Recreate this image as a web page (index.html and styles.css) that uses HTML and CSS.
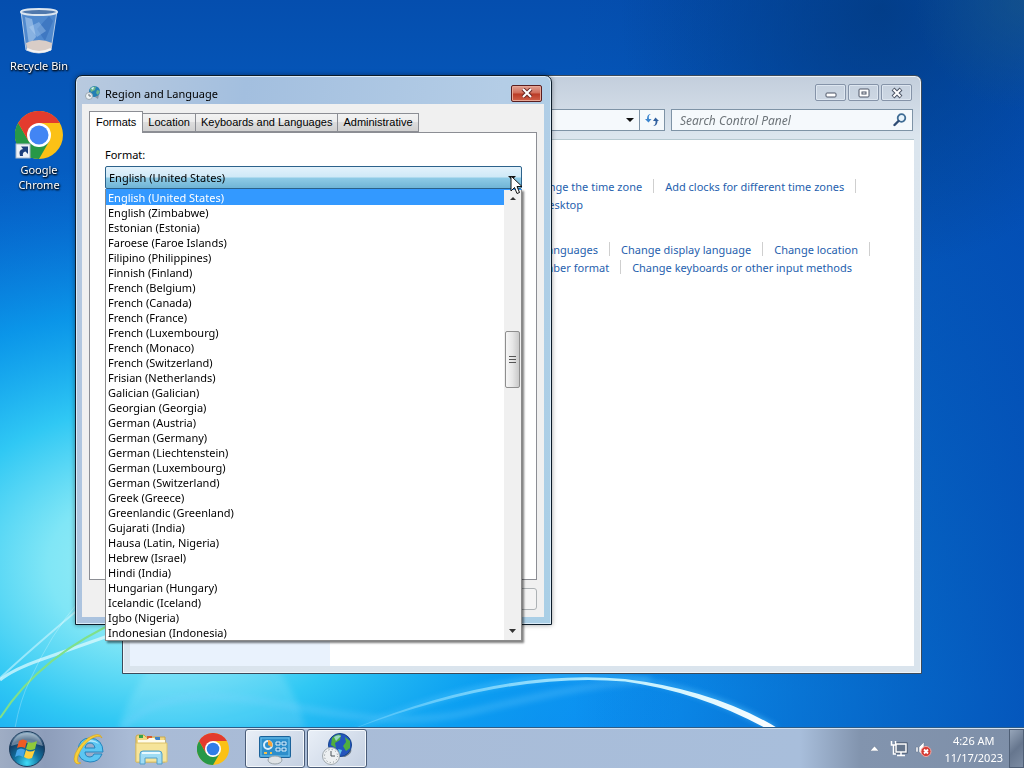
FILE: index.html
```html
<!DOCTYPE html>
<html lang="en">
<head>
  <meta charset="UTF-8" />
  <meta name="viewport" content="width=device-width, initial-scale=1.0" />
  <title>Region and Language</title>
  <link rel="stylesheet" href="styles.css">
</head>
<body>

  <!-- Wallpaper -->
  <svg class="wallpaper" viewBox="0 0 1024 768" preserveAspectRatio="none" aria-hidden="true">
    <defs>
      <linearGradient id="sky" x1="0" y1="0" x2="0" y2="1">
        <stop offset="0" stop-color="#054eae"/>
        <stop offset=".3" stop-color="#0562c8"/>
        <stop offset=".7" stop-color="#0a88e6"/>
        <stop offset=".9" stop-color="#0c96f6"/>
        <stop offset="1" stop-color="#0c92f6"/>
      </linearGradient>
      <radialGradient id="glow" gradientUnits="userSpaceOnUse" cx="0" cy="0" r="1" gradientTransform="translate(160 565) scale(560 400)">
        <stop offset="0" stop-color="#a4f0f6"/>
        <stop offset=".2" stop-color="#80e6f6"/>
        <stop offset=".4" stop-color="#30c8f4"/>
        <stop offset=".64" stop-color="#0ca2f0" stop-opacity=".75"/>
        <stop offset="1" stop-color="#0a7ae0" stop-opacity="0"/>
      </radialGradient>
      <linearGradient id="shade" x1="0" y1="0" x2="1" y2="0">
        <stop offset=".56" stop-color="#0348a4" stop-opacity="0"/>
        <stop offset=".88" stop-color="#034cae" stop-opacity=".65"/>
        <stop offset="1" stop-color="#034cb2" stop-opacity=".85"/>
      </linearGradient>
      <radialGradient id="corner" gradientUnits="userSpaceOnUse" cx="880" cy="10" r="260">
        <stop offset="0" stop-color="#023a80" stop-opacity=".8"/>
        <stop offset="1" stop-color="#023a80" stop-opacity="0"/>
      </radialGradient>
      <radialGradient id="leaf" gradientUnits="userSpaceOnUse" cx="1024" cy="0" r="110">
        <stop offset="0" stop-color="#1c5680" stop-opacity=".6"/>
        <stop offset="1" stop-color="#1c5680" stop-opacity="0"/>
      </radialGradient>
      <linearGradient id="streak" gradientUnits="userSpaceOnUse" x1="350" y1="0" x2="780" y2="0">
        <stop offset="0" stop-color="#7fd8ff" stop-opacity=".4"/>
        <stop offset=".6" stop-color="#b8eeff"/>
        <stop offset="1" stop-color="#fff"/>
      </linearGradient>
      <filter id="soft"><feGaussianBlur stdDeviation="3"/></filter>
    </defs>
    <rect width="1024" height="768" fill="url(#sky)"/>
    <rect width="1024" height="768" fill="url(#glow)"/>
    <rect width="1024" height="768" fill="url(#shade)"/>
    <rect width="1024" height="768" fill="url(#corner)"/>
    <rect width="1024" height="768" fill="url(#leaf)"/>
    <path d="M118 728Q140 670 170 645L250 640Q295 680 305 728Z" fill="#fff" opacity=".12" filter="url(#soft)"/>
    <path d="M122 728C200 650 330 745 470 712S610 685 650 680" fill="none" stroke="#7fd4ff" stroke-width="5" opacity=".35" filter="url(#soft)"/>
    <path d="M0 678Q30 650 80 608" fill="none" stroke="#d8faff" stroke-width="2" opacity=".55"/>
    <path d="M0 680Q12 670 40 660T125 630" fill="none" stroke="#e4fcff" stroke-width="3" opacity=".7"/>
    <path d="M0 718Q40 655 125 618" fill="none" stroke="#7fe08a" stroke-width="2"/>
    <path d="M15 728Q20 700 30 680Q50 635 80 600" fill="none" stroke="#fff" stroke-width="1" opacity=".25"/>
    <path d="M355 728Q500 665 625 676Q715 690 778 728H768Q700 690 625 678.500Q510 668 355 729Z" fill="#5cc8ff" filter="url(#soft)" opacity=".8"/>
    <path d="M355 728Q500 668 625 679Q715 690 779 729H767Q700 692 625 681.500Q510 671 355 728.500Z" fill="url(#streak)"/>
  </svg>

  <main class="desktop">
    <div class="icons">
      <button class="shortcut">
        <svg width="48" height="48" viewBox="0 0 48 48">
          <path d="M6 4L11 43Q24 49 36 43L42 4Z" fill="#8eb8e6" fill-opacity=".55" stroke="#b4cbe6" stroke-width="1"/>
          <path d="M10 10L14 38L21 30L17 12Z" fill="#dff0ff" opacity=".4"/>
          <path d="M34 9L22 22L30 34L38 14Z" fill="#2c64b4" opacity=".45"/>
          <path d="M14 20L24 15L31 24L22 30Z" fill="#bfdcf8" opacity=".35"/>
          <path d="M11 36Q24 30 37 36L36 43Q24 49 12 43Z" fill="#d9cdc7"/>
          <path d="M12 42Q24 48 36 42" fill="none" stroke="#f3f3f3" stroke-width="2"/>
          <ellipse cx="24" cy="5" rx="18" ry="3" fill="#5078ac" stroke="#dce6f0" stroke-width="2"/>
        </svg>
        <span>Recycle Bin</span>
      </button>
      <button class="shortcut">
        <svg width="48" height="48" viewBox="0 0 48 48">
          <circle cx="24" cy="24" r="24" fill="#fbc116"/>
          <path d="M13.600 30L3.200 12A24 24 0 0 0 24 48L34.400 30L24 36Z" fill="#279847"/>
          <path d="M3.200 12A24 24 0 0 1 44.800 12H24L13.600 30Z" fill="#e33b2e"/>
          <circle cx="24" cy="24" r="12" fill="#fff"/>
          <circle cx="24" cy="24" r="9.500" fill="#4285f4"/>
          <rect x="1" y="33" width="14" height="14" fill="#eef2f7" stroke="#aab8c8"/>
          <path d="M5 45Q3 39 8 38L6 35.500H13V43L10.500 40.500Q7 41 8 45Z" fill="#1d3f7c"/>
        </svg>
        <span>Google Chrome</span>
      </button>
    </div>

    <!-- Control Panel -->
    <section class="window panel-window" aria-label="Control Panel">
      <div class="caption">
        <button aria-label="Minimize"><svg width="14" height="12"><rect x="2" y="6" width="10" height="4" rx="1" fill="#fff" stroke="#4c5566"/></svg></button>
        <button aria-label="Maximize"><svg width="14" height="12"><rect x="2" y="2" width="10" height="8" rx="1" fill="#fff" stroke="#4c5566"/><rect x="5" y="5" width="4" height="2" fill="#fff" stroke="#4c5566"/></svg></button>
        <button aria-label="Close"><svg width="14" height="12"><path d="M3 2L11 10M11 2L3 10" stroke="#4c5566" stroke-width="4"/><path d="M3.500 2.500L10.500 9.500M10.500 2.500L3.500 9.500" stroke="#fff" stroke-width="2"/></svg></button>
      </div>
      <div class="toolbar">
        <div class="address">
          <button aria-label="Previous locations"><svg width="8" height="4"><path d="M0 0H8L4 4Z" fill="#111"/></svg></button>
          <button class="refresh" aria-label="Refresh">
            <svg width="14" height="14" viewBox="0 0 14 14"><path d="M6 1Q3 2 4 6H6.500L3.500 9.500L0 6H2Q2 1 6 1Z" fill="#3d86cf"/><path d="M8 13Q11 12 10.500 8H8L10.500 4.500L14 8H12.500Q12.500 13 8 13Z" fill="#2f5f9f"/></svg>
          </button>
        </div>
        <div class="search">
          <input type="text" placeholder="Search Control Panel" aria-label="Search Control Panel">
          <svg width="14" height="14" viewBox="0 0 14 14"><circle cx="8.500" cy="5" r="3.800" fill="#e8f4fc" stroke="#3f6c94" stroke-width="1.800"/><path d="M5.500 8L1.500 12" stroke="#2f4c74" stroke-width="2.400" stroke-linecap="round"/></svg>
        </div>
      </div>
      <div class="panel-body">
        <aside></aside>
        <div class="tasks">
          <div class="group">
            <ul>
              <li><a href="#">Set the time and date</a></li>
              <li><a href="#">Change the time zone</a></li>
              <li><a href="#">Add clocks for different time zones</a></li>
            </ul>
            <ul>
              <li class="last"><a href="#">Add the Clock gadget to the desktop</a></li>
            </ul>
          </div>
          <div class="group">
            <ul>
              <li class="wide"><a href="#">Install or uninstall display languages</a></li>
              <li><a href="#">Change display language</a></li>
              <li><a href="#">Change location</a></li>
            </ul>
            <ul>
              <li><a href="#">Change the date, time, or number format</a></li>
              <li class="last"><a href="#">Change keyboards or other input methods</a></li>
            </ul>
          </div>
        </div>
      </div>
    </section>

    <!-- Region and Language dialog -->
    <section class="window dialog" role="dialog" aria-labelledby="dialogTitle">
      <header>
        <svg width="16" height="16" viewBox="0 0 16 16">
          <circle cx="9.500" cy="6.500" r="5.500" fill="#247fb4"/>
          <path d="M7 2L11 1.500L10 5L6 7L5 4ZM12 5L15 6L13 10L11 8Z" fill="#6fb48a"/>
          <path d="M6 3L9 2L8 5Z" fill="#d4f4ff"/>
          <path d="M10 12L14 10L13 14Z" fill="#8593a4"/>
          <circle cx="4" cy="11" r="3.500" fill="#edf2f5" stroke="#9aa7b1"/>
          <path d="M4 9V11H6" fill="none" stroke="#66727d"/>
        </svg>
        <h1 id="dialogTitle">Region and Language</h1>
        <button class="close" aria-label="Close"><svg width="12" height="10"><path d="M2 1L10 9M10 1L2 9" stroke="#6d2a26" stroke-width="4"/><path d="M2 1L10 9M10 1L2 9" stroke="#fff" stroke-width="2"/></svg></button>
      </header>
      <div class="client">
        <div class="tabs" role="tablist">
          <button role="tab" class="active" aria-selected="true">Formats</button>
          <button role="tab">Location</button>
          <button role="tab">Keyboards and Languages</button>
          <button role="tab">Administrative</button>
        </div>
        <div class="sheet">
          <label for="format">Format:</label>
          <div class="combo">
            <select id="format"><option>English (United States)</option></select>
            <svg class="arrow" width="8" height="4"><path d="M0 0H8L4 4Z" fill="#111"/></svg>
            <div class="dropdown">
              <ul role="listbox" aria-label="Format">
                <li role="option" aria-selected="true" class="selected">English (United States)</li>
                <li role="option">English (Zimbabwe)</li>
                <li role="option">Estonian (Estonia)</li>
                <li role="option">Faroese (Faroe Islands)</li>
                <li role="option">Filipino (Philippines)</li>
                <li role="option">Finnish (Finland)</li>
                <li role="option">French (Belgium)</li>
                <li role="option">French (Canada)</li>
                <li role="option">French (France)</li>
                <li role="option">French (Luxembourg)</li>
                <li role="option">French (Monaco)</li>
                <li role="option">French (Switzerland)</li>
                <li role="option">Frisian (Netherlands)</li>
                <li role="option">Galician (Galician)</li>
                <li role="option">Georgian (Georgia)</li>
                <li role="option">German (Austria)</li>
                <li role="option">German (Germany)</li>
                <li role="option">German (Liechtenstein)</li>
                <li role="option">German (Luxembourg)</li>
                <li role="option">German (Switzerland)</li>
                <li role="option">Greek (Greece)</li>
                <li role="option">Greenlandic (Greenland)</li>
                <li role="option">Gujarati (India)</li>
                <li role="option">Hausa (Latin, Nigeria)</li>
                <li role="option">Hebrew (Israel)</li>
                <li role="option">Hindi (India)</li>
                <li role="option">Hungarian (Hungary)</li>
                <li role="option">Icelandic (Iceland)</li>
                <li role="option">Igbo (Nigeria)</li>
                <li role="option">Indonesian (Indonesia)</li>
              </ul>
              <div class="scrollbar">
                <svg width="6" height="3"><path d="M0 3H6L3 0Z" fill="#333"/></svg>
                <div class="track"><div class="thumb"><i></i><i></i><i></i></div></div>
                <svg width="7" height="4"><path d="M0 0H7L3.500 4Z" fill="#333"/></svg>
              </div>
            </div>
            <svg class="cursor" width="13" height="20" viewBox="0 0 13 20"><path d="M1 1V16L4.500 12.500L7 18.500L9.500 17.500L7 11.500H12Z" fill="#fff" stroke="#111"/></svg>
          </div>
        </div>
        <footer><button aria-label="Apply" disabled></button></footer>
      </div>
    </section>
  </main>

  <!-- Taskbar -->
  <nav class="taskbar">
    <button class="start" aria-label="Start">
      <svg width="40" height="38" viewBox="0 0 40 38">
        <defs><radialGradient id="orb" cx=".5" cy=".9" r=".9"><stop offset="0" stop-color="#3fdcf8"/><stop offset=".4" stop-color="#12729f"/><stop offset=".75" stop-color="#123a62"/><stop offset="1" stop-color="#8badc6"/></radialGradient></defs>
        <circle cx="20" cy="19" r="17.500" fill="url(#orb)" stroke="#1d3c5c"/>
        <path d="M4 16Q8 3 20 3T36 16Q20 10 4 16Z" fill="#fff" opacity=".35"/>
        <path d="M12 11Q16 8 20 11L18 18Q14 16 10 18Z" fill="#ee5a24"/>
        <path d="M21 12Q25 14 30 11L28 19Q23 21 19 19Z" fill="#8fc93a"/>
        <path d="M10 20Q14 17 18 20L16 27Q12 24 8 27Z" fill="#45a5e8"/>
        <path d="M19 20Q23 23 28 20L25 28Q21 30 17 27Z" fill="#ffd03c"/>
      </svg>
    </button>
    <button class="task" aria-label="Internet Explorer">
      <svg width="34" height="34" viewBox="0 0 34 34">
        <path d="M30 22Q27 30 18 30Q6 29 6 18Q7 6 18 6Q31 7 31 20H13Q13 25 18 25Q21 25 22 22ZM13 16H23Q22 11 18 11Q14 11 13 16Z" fill="#5cc6f2" stroke="#2484bd" fill-rule="evenodd"/>
        <path d="M9 13Q12 8 18 8Q24 8 27 12Q18 7 9 13Z" fill="#c8f0ff" opacity=".8"/>
        <path d="M30 6Q28 -1 16 6Q3 16 2 27Q3 34 9 31Q4 31 6 24Q10 13 19 7Q27 2 30 6Z" fill="#f8cf38" stroke="#d5a015" stroke-width=".6"/>
      </svg>
    </button>
    <button class="task" aria-label="Windows Explorer">
      <svg width="34" height="34" viewBox="0 0 34 34">
        <path d="M2 5Q2 3 4 3H10L12 5H31V30H2Z" fill="#f2d983" stroke="#c9a84a"/>
        <path d="M5 3H9V6H5Z" fill="#35a24a"/><path d="M13 4H18V7H13Z" fill="#d65b32"/><path d="M21 5H26V8H21Z" fill="#3e83c9"/>
        <path d="M4 8H13L15 6H20L22 8H31V11H4Z" fill="#fffbe9"/>
        <path d="M2 11H33V30H2Z" fill="#f6e49a" stroke="#dcc26a"/>
        <path d="M6 32V22Q6 19 9 19H25Q28 19 28 22V32H23V26H11V32Z" fill="#9fdcf4" stroke="#519fc9"/>
        <path d="M8 21H26" stroke="#e8faff" stroke-width="2"/>
      </svg>
    </button>
    <button class="task" aria-label="Google Chrome">
      <svg width="32" height="32" viewBox="0 0 48 48">
        <circle cx="24" cy="24" r="24" fill="#fbc116"/>
        <path d="M13.600 30L3.200 12A24 24 0 0 0 24 48L34.400 30L24 36Z" fill="#279847"/>
        <path d="M3.200 12A24 24 0 0 1 44.800 12H24L13.600 30Z" fill="#e33b2e"/>
        <circle cx="24" cy="24" r="12" fill="#fff"/>
        <circle cx="24" cy="24" r="9.500" fill="#2f7de8"/>
      </svg>
    </button>
    <button class="task open" aria-label="Control Panel">
      <svg width="34" height="32" viewBox="0 0 34 32">
        <rect x="1.500" y="3.500" width="31" height="21" rx="1" fill="#2d8ecb" stroke="#1b629a"/>
        <rect x="3" y="5" width="28" height="18" fill="none" stroke="#72c2ec"/>
        <circle cx="10" cy="12" r="4" fill="none" stroke="#d9f0ff" stroke-width="2"/><path d="M10 12V7A5 5 0 0 1 14 14Z" fill="#f5a33a"/>
        <path d="M18 9H22V12H18ZM24 9H28V12H24ZM18 15H22V18H18ZM24 15H28V18H24Z" fill="#2374b4" stroke="#dff3ff"/>
        <path d="M6 20H9M12 20H14" stroke="#f3c04b" stroke-width="2"/>
        <ellipse cx="17" cy="27" rx="7" ry="4" fill="#dfe3e6" stroke="#98a2a9"/>
      </svg>
    </button>
    <button class="task open" aria-label="Region and Language">
      <svg width="34" height="34" viewBox="0 0 34 34">
        <path d="M14 23L31 17Q33 21 25 25Z" fill="#6e7b88"/>
        <circle cx="20" cy="13" r="11.500" fill="#2455bd" stroke="#14438c"/>
        <path d="M12 6Q17 1 21 3L20 8L15 11L16 16L11 13ZM25 5L30 9L30 16L26 19L23 14L26 10Z" fill="#4fae3e"/>
        <path d="M14 5Q18 2 21 4L16 9Z" fill="#b8e8ff" opacity=".7"/>
        <path d="M18 17L22 18L20 23Z" fill="#62c5e8"/>
        <circle cx="11" cy="24" r="8.500" fill="#edf0f2" stroke="#a1a9ae"/>
        <circle cx="11" cy="24" r="6.500" fill="none" stroke="#838c92" stroke-dasharray="1 2.400"/>
        <path d="M11 19V24H15" fill="none" stroke="#4a5258"/>
      </svg>
    </button>

    <div class="tray">
      <button class="more" aria-label="Show hidden icons"><svg width="9" height="5"><path d="M0 5H9L4.500 0Z" fill="#fff" stroke="#5b6a80" stroke-width=".5"/></svg></button>
      <button aria-label="Network">
        <svg width="18" height="18" viewBox="0 0 18 18"><rect x="6" y="4" width="10" height="8" fill="#66768c" stroke="#37455a" stroke-width="3"/><rect x="6" y="4" width="10" height="8" fill="#66768c" stroke="#fff" stroke-width="1.500"/><path d="M11 12V15M7 15.500H15M3.500 7V14H6M1.500 1V5H5.500V1M3.500 5V7" fill="none" stroke="#fff" stroke-width="1.500"/></svg>
      </button>
      <button aria-label="Volume muted">
        <svg width="18" height="18" viewBox="0 0 18 18"><path d="M2 7H4V12H2ZM5 7L10 2V16L5 12Z" fill="#fff" stroke="#66778d" stroke-width=".5"/><circle cx="12" cy="11.500" r="5" fill="#d53a32" stroke="#f1aaa5"/><path d="M10 9.500L14 13.500M14 9.500L10 13.500" stroke="#fff" stroke-width="1.800"/></svg>
      </button>
      <div class="clock"><time>4:26 AM</time><time>11/17/2023</time></div>
    </div>
    <button class="show-desktop" aria-label="Show desktop"></button>
  </nav>

</body>
</html>
```
FILE: styles.css
```css
* { box-sizing: border-box; margin: 0; padding: 0; }

html, body { height: 100%; }

body {
  display: flex;
  flex-direction: column;
  overflow: hidden;
  background: #0560c6;
  font-family: "Noto Sans", "Open Sans", sans-serif;
  font-size: 11px;
  color: #000;
}

button, input, select { font: inherit; color: inherit; }
button { border: none; background: none; }
ul { list-style: none; }
svg { display: block; flex: none; }

.wallpaper {
  position: fixed;
  inset: 0;
  width: 100%;
  height: 100%;
}

.desktop {
  position: relative;
  flex: 1;
}

/* Desktop shortcuts */
.icons {
  display: flex;
  flex-direction: column;
  gap: 38px;
  width: 78px;
  padding-top: 7px;
}

.shortcut {
  display: flex;
  flex-direction: column;
  align-items: center;
  gap: 3px;
  padding: 0 8px;
  line-height: 15px;
  color: #fff;
  text-shadow: 0 1px 2px #000, 1px 1px 2px #000;
}

.shortcut:first-child { padding: 0; }

/* Windows */
.window {
  position: absolute;
  display: flex;
  flex-direction: column;
  border: 1px solid #3c4a5a;
  border-radius: 7px 7px 0 0;
}

.panel-window {
  top: 75px;
  left: 122px;
  right: 102px;
  bottom: 54px;
  padding: 0 7px 7px;
  background: linear-gradient(#c3cedc, #dbe5ee 60px, #dae4ed);
  box-shadow: inset 0 0 0 1px #eef4f9;
}

.caption {
  display: flex;
  justify-content: flex-end;
  gap: 2px;
  padding: 8px 2px;
}

.caption button {
  display: grid;
  place-items: center;
  width: 31px;
  height: 17px;
  border: 1px solid #8593a8;
  border-radius: 2px;
  box-shadow: inset 0 0 0 1px #dde6f0;
}

.toolbar {
  display: flex;
  justify-content: flex-end;
  gap: 6px;
  padding-right: 1px;
  height: 30px;
}

.address, .search {
  display: flex;
  align-items: center;
  height: 22px;
  border: 1px solid #7e93a6;
  background: #f5f9fc;
}

.address { flex: 1; justify-content: flex-end; }
.address button { padding: 0 5px; }

.address .refresh {
  align-self: stretch;
  border-left: 1px solid #7e93a6;
}

.search { width: 242px; padding: 0 5px 0 8px; }

.search input {
  flex: 1;
  min-width: 0;
  border: none;
  outline: none;
  background: none;
  font-size: 12px;
  font-style: italic;
}

.search input::placeholder { color: #6d7479; }

.panel-body {
  flex: 1;
  display: flex;
  border-top: 1px solid #b5c8d0;
  background: #fff;
}

.panel-body aside { width: 200px; background: #e9f2fd; }

.tasks {
  flex: 1;
  display: flex;
  flex-direction: column;
  gap: 27px;
  padding: 37px 20px 0 65px;
}

.tasks ul { display: flex; }

.tasks li {
  display: flex;
  align-items: center;
  height: 18px;
  white-space: nowrap;
}

.tasks li:not(.last)::after {
  content: "";
  height: 14px;
  margin: 0 11px;
  border-left: 1px solid #cfcfcf;
}

.tasks .wide {
  justify-content: flex-end;
  min-width: 226px;
}

.tasks a { color: #1f5fae; text-decoration: none; }

/* Dialog */
.dialog {
  top: 75px;
  left: 75px;
  width: 477px;
  padding: 0 7px 7px 6px;
  border-color: #0c1c2a;
  background: linear-gradient(100deg, #b9cadf, #a3bfdf 30%, #b4cde6 75%, #a9cfe6);
  box-shadow: inset 0 0 0 1px #dcecf8, 0 0 5px rgba(0, 0, 0, 0.4);
}

.dialog header {
  display: flex;
  align-items: center;
  gap: 4px;
  height: 28px;
  padding: 6px 2px 0 3px;
}

.dialog h1 {
  flex: 1;
  font-size: 11px;
  font-weight: normal;
}

.close {
  display: grid;
  place-items: center;
  width: 31px;
  height: 17px;
  border: 1px solid #591e20;
  border-radius: 2px;
  background: linear-gradient(#e0a193, #cf6b58 48%, #b93a25 52%, #d1614a);
  box-shadow: inset 0 0 0 1px #e8a897;
}

.client { padding: 7px; background: #f0f0f0; }

.tabs {
  position: relative;
  display: flex;
  align-items: flex-end;
  height: 21px;
  font-family: "Liberation Sans", Arial, sans-serif;
}

.tabs button {
  height: 19px;
  padding: 0 5px;
  border: 1px solid #8c8e94;
  border-left-width: 0;
  background: linear-gradient(#f3f3f3, #ebebeb 50%, #dddddd 50%, #d0d0d0);
  line-height: 17px;
  white-space: nowrap;
}

.tabs .active {
  height: 22px;
  margin-bottom: -1px;
  padding: 0 6px;
  border-left-width: 1px;
  border-bottom: none;
  background: #fff;
}

.sheet {
  height: 448px;
  padding: 14px 15px 0;
  border: 1px solid #8c8e94;
  background: #fff;
}

.sheet label { display: block; height: 19px; line-height: 16px; }

.combo { position: relative; }

.combo select {
  display: block;
  width: 417px;
  height: 23px;
  padding: 0 3px;
  appearance: none;
  border: 1px solid #2c628b;
  border-radius: 2px;
  background: linear-gradient(#e3f2fb, #cfe9f7 48%, #8fcbe6 52%, #70b5d6);
}

.arrow {
  position: absolute;
  top: 10px;
  right: 5px;
}

.dropdown {
  position: absolute;
  top: 100%;
  left: 0;
  z-index: 1;
  display: flex;
  width: 417px;
  border: 1px solid #8a8a8a;
  border-top-color: #3399ff;
  background: #fff;
  box-shadow: 2px 2px 2px rgba(0, 0, 0, 0.5);
}

.dropdown ul { flex: 1; }

.dropdown li {
  height: 15px;
  padding-left: 2px;
  line-height: 15px;
}

.dropdown .selected { background: #3399ff; color: #fff; }

.scrollbar {
  display: flex;
  flex-direction: column;
  align-items: center;
  width: 17px;
  padding: 7px 0;
  background: #f0f0f0;
}

.track { flex: 1; padding-top: 131px; }

.thumb {
  display: flex;
  flex-direction: column;
  align-items: center;
  justify-content: center;
  gap: 2px;
  width: 15px;
  height: 57px;
  border: 1px solid #8e8e8e;
  border-radius: 2px;
  background: linear-gradient(90deg, #f6f6f6, #e6e6e6 50%, #c9c9c9);
}

.thumb i { width: 7px; height: 1px; background: #555; }

.cursor {
  position: absolute;
  top: 9px;
  left: 405px;
  z-index: 2;
}

.client footer {
  display: flex;
  justify-content: flex-end;
  padding-top: 8px;
}

.client footer button {
  width: 75px;
  height: 22px;
  border: 1px solid #adb2b5;
  border-radius: 3px;
  background: #f4f4f4;
}

/* Taskbar */
.taskbar {
  position: relative;
  display: flex;
  gap: 2px;
  height: 40px;
  border-top: 1px solid #d4e2f0;
  background: linear-gradient(90deg, #9fadc4, #8d9dba 45px, #a9bbd6 130px, #a8bedb 800px, #8294ae 860px, #7e8fa8);
  box-shadow: 0 -1px 0 #2c5c88;
}

.taskbar button { display: grid; place-items: center; }

.start { width: 57px; padding-right: 4px; }
.task { width: 60px; }

.open {
  border: 1px solid #4a5c78;
  border-radius: 3px;
  background: linear-gradient(135deg, #e9eff7, #c4d0e2);
  box-shadow: inset 0 0 0 1px #f4f8fc;
}

.tray {
  display: flex;
  align-items: center;
  gap: 6px;
  margin-left: auto;
  padding-right: 4px;
  color: #fff;
}

.more { margin-right: 5px; }

.clock {
  margin-left: 6px;
  line-height: 17px;
  text-align: center;
}

.clock time { display: block; }

.show-desktop {
  width: 15px;
  border: 1px solid #4f5f76;
  background: linear-gradient(135deg, #96a5b9, #66768e 50%, #7c8ca3);
}
```
